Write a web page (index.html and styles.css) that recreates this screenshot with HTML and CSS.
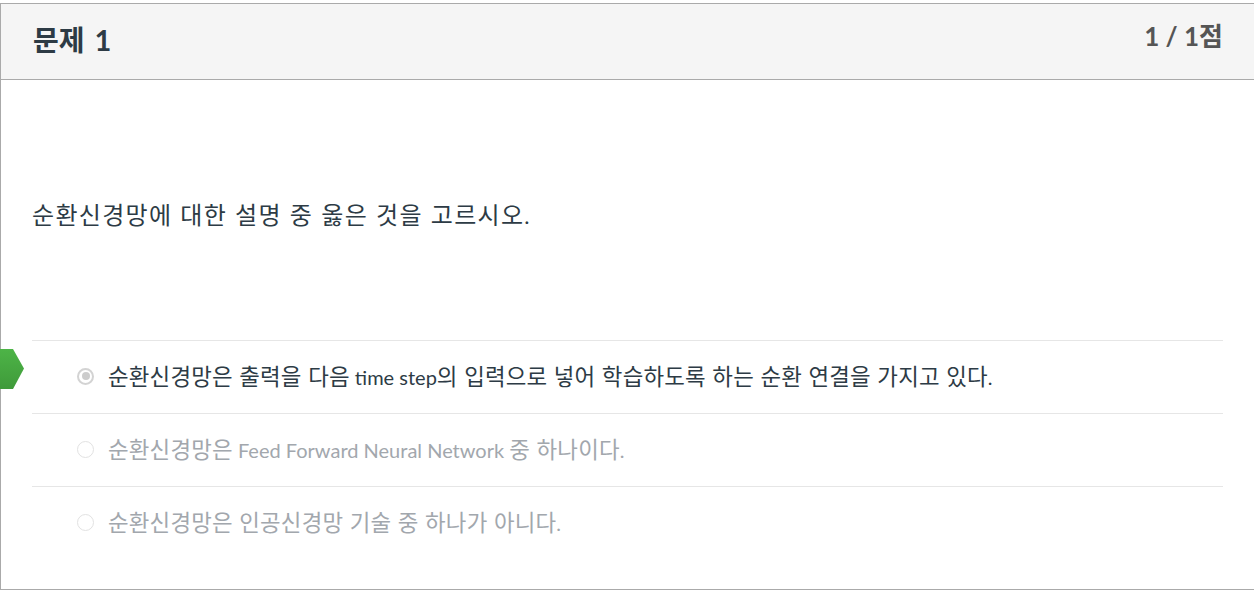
FILE: index.html
```html
<!DOCTYPE html>
<html lang="ko">
<head>
<meta charset="utf-8">
<link rel="stylesheet" href="styles.css">
</head>
<body>
<div class="quiz">
  <div class="header">
    <h2 class="title"><span class="ko">문제</span> 1</h2>
    <div class="score">1 / 1<span class="ko">점</span></div>
  </div>
  <div class="content">
    <p class="question"><span class="ko">순환신경망에 대한 설명 중 옳은 것을 고르시오</span>.</p>
    <div class="answers">
      <div class="answer selected">
        <svg class="marker" width="24" height="40" viewBox="0 0 24 40"><defs><linearGradient id="g" x1="0" y1="0" x2="0" y2="1"><stop offset="0" stop-color="#4db447"/><stop offset="1" stop-color="#3f9a3a"/></linearGradient></defs><polygon points="0,0 13,0 24,19.5 13,40 0,40" fill="url(#g)"/></svg>
        <span class="radio checked"></span>
        <span class="text"><span class="ko">순환신경망은 출력을 다음</span> time step<span class="ko">의 입력으로 넣어 학습하도록 하는 순환 연결을 가지고 있다</span>.</span>
      </div>
      <div class="answer muted">
        <span class="radio"></span>
        <span class="text"><span class="ko">순환신경망은</span> Feed Forward Neural Network <span class="ko">중 하나이다</span>.</span>
      </div>
      <div class="answer muted">
        <span class="radio"></span>
        <span class="text"><span class="ko">순환신경망은 인공신경망 기술 중 하나가 아니다</span>.</span>
      </div>
    </div>
  </div>
</div>
</body>
</html>
```
FILE: styles.css
```css
html, body {
  margin: 0;
  padding: 0;
  background: #fff;
}
body {
  font-family: Lato, "Noto Sans CJK KR", sans-serif;
  color: #2d3b45;
  overflow: hidden;
}
.ko {
  font-family: "Noto Sans CJK KR", sans-serif;
  font-size: 1.12em;
  letter-spacing: 0.2px;
}
.quiz {
  margin-top: 3px;
  width: 1260px;
  border: 1px solid #aaaaaa;
  border-right: none;
  box-sizing: border-box;
  height: 587px;
}
.header {
  background: #f5f5f5;
  border-bottom: 1px solid #aaaaaa;
  height: 76px;
  display: flex;
  justify-content: space-between;
  align-items: flex-start;
  padding: 0 31px 0 32px;
  width: 1253px;
  box-sizing: border-box;
}
.title {
  margin: 0;
  font-size: 29px;
  font-weight: 700;
  line-height: 32px;
  padding-top: 19px;
  color: #2d3b45;
}
.title .ko {
  font-size: 28px;
  letter-spacing: 0;
  margin-right: 3px;
}
.score .ko {
  font-size: 1em;
  letter-spacing: 0;
}
.score {
  font-size: 26px;
  font-weight: 700;
  color: #555555;
  line-height: 30px;
  padding-top: 16px;
}
.content {
  width: 1253px;
  box-sizing: border-box;
  padding: 0 31px 0 31px;
}
.question {
  margin: 0;
  padding-top: 119px;
  font-size: 22px;
  line-height: 30px;
  height: 141px;
  box-sizing: content-box;
}
.question .ko {
  font-size: 24px;
  letter-spacing: 1.3px;
}
.answers {
  border-top: 1px solid #e6e6e6;
}
.answer {
  position: relative;
  height: 72px;
  box-sizing: content-box;
  display: flex;
  align-items: center;
  border-bottom: 1px solid #e6e6e6;
  font-size: 20px;
}
.answer:last-child {
  border-bottom: none;
}
.text {
  position: relative;
  top: -2px;
}
.marker {
  position: absolute;
  left: -32px;
  top: 8px;
}
.radio {
  width: 17px;
  height: 17px;
  border-radius: 50%;
  box-sizing: border-box;
  border: 1.5px solid #e2e2e2;
  background: #fff;
  margin-left: 45px;
  margin-right: 14px;
  flex: none;
  position: relative;
  top: -1px;
}
.radio.checked {
  border: 2px solid #d3d3d3;
}
.radio.checked::after {
  content: "";
  position: absolute;
  left: 2.5px;
  top: 2.5px;
  width: 8px;
  height: 8px;
  border-radius: 50%;
  background: #cccccc;
}
.muted .text {
  color: #a2a7ad;
}
```
